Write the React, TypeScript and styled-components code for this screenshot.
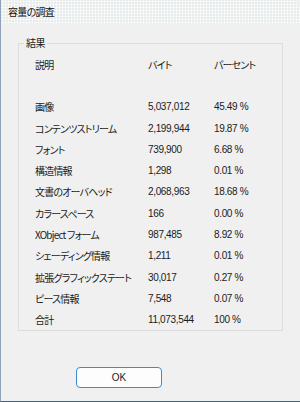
import React from "react";
import styled, { createGlobalStyle } from "styled-components";

const GlobalStyle = createGlobalStyle`
  html, body { margin: 0; padding: 0; }
  body {
    width: 300px;
    height: 402px;
    overflow: hidden;
    background: #f0f0f0;
    font-family: "Noto Sans CJK JP", "Liberation Sans", sans-serif;
    font-feature-settings: "palt";
    color: #1b1b1b;
  }
`;

const Window = styled.div`
  width: 300px;
  height: 402px;
  box-sizing: border-box;
  display: flex;
  flex-direction: column;
  background: #f0f0f0;
  border-left: 1px solid #8da3ba;
  border-bottom: 1px solid #3f6189;
  border-top-right-radius: 8px;
  overflow: hidden;
`;

const TitleBar = styled.div`
  height: 23px;
  flex: none;
  display: flex;
  align-items: center;
  padding-left: 7px;
  font-size: 10px;
  letter-spacing: -0.7px;
  color: #111;
  background-color: #e8ecec;
  background-image: radial-gradient(circle, #ffffff 0.9px, transparent 1.1px);
  background-size: 3px 3px;
`;

const Body = styled.div`
  flex: 1;
  display: flex;
  flex-direction: column;
  padding: 12px 17px 0 17px;
`;

const Group = styled.fieldset`
  margin: 0;
  padding: 0;
  min-width: 0;
  border: 1px solid #dcdcdc;
`;

const Legend = styled.legend`
  margin-left: 5px;
  padding: 0 2px;
  font-size: 10px;
  line-height: 16px;
  letter-spacing: -0.5px;
  color: #1b1b1b;
`;

const Table = styled.div`
  display: grid;
  grid-template-columns: 113px 66px 1fr;
  grid-auto-rows: 21.3px;
  padding-left: 16px;
  margin-top: 2.5px;
`;

const Cell = styled.div<{ $num?: boolean }>`
  display: flex;
  align-items: center;
  font-size: 10px;
  white-space: nowrap;
  font-family: ${(p) =>
    p.$num ? '"Liberation Sans", sans-serif' : '"Noto Sans CJK JP", "Liberation Sans", sans-serif'};
  letter-spacing: ${(p) => (p.$num ? "-0.35px" : "-0.8px")};
  color: #1b1b1b;
`;

const Spacer = styled.div`
  grid-column: 1 / -1;
  height: 23.2px;
`;

const Footer = styled.div`
  padding: 31px 0 0 58px;
`;

const OkButton = styled.button`
  width: 86px;
  height: 21px;
  box-sizing: border-box;
  border: 1px solid #3d8ad6;
  border-radius: 4px;
  background: #fdfdfd;
  font-family: "Liberation Sans", sans-serif;
  font-size: 10px;
  color: #1b1b1b;
  padding: 0;
`;

const rows: [string, string, string][] = [
  ["画像", "5,037,012", "45.49 %"],
  ["コンテンツストリーム", "2,199,944", "19.87 %"],
  ["フォント", "739,900", "6.68 %"],
  ["構造情報", "1,298", "0.01 %"],
  ["文書のオーバヘッド", "2,068,963", "18.68 %"],
  ["カラースペース", "166", "0.00 %"],
  ["XObject フォーム", "987,485", "8.92 %"],
  ["シェーディング情報", "1,211", "0.01 %"],
  ["拡張グラフィックステート", "30,017", "0.27 %"],
  ["ピース情報", "7,548", "0.07 %"],
  ["合計", "11,073,544", "100 %"],
];

export default function App() {
  return (
    <>
      <GlobalStyle />
      <Window>
        <TitleBar>容量の調査</TitleBar>
        <Body>
          <Group>
            <Legend>結果</Legend>
            <Table>
              <Cell>説明</Cell>
              <Cell>バイト</Cell>
              <Cell>パーセント</Cell>
              <Spacer />
              {rows.map(([label, bytes, pct]) => (
                <React.Fragment key={label}>
                  <Cell>{label}</Cell>
                  <Cell $num>{bytes}</Cell>
                  <Cell $num>{pct}</Cell>
                </React.Fragment>
              ))}
            </Table>
          </Group>
          <Footer>
            <OkButton>OK</OkButton>
          </Footer>
        </Body>
      </Window>
    </>
  );
}
